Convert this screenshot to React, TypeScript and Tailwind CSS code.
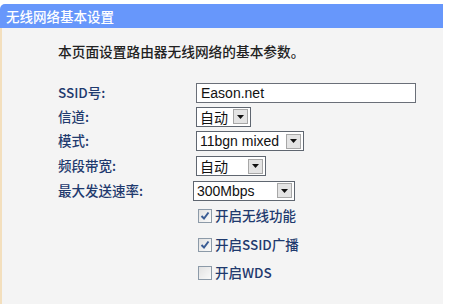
import React from "react";

const CJK = { fontFamily: '"Noto Sans CJK SC", "Noto Sans", sans-serif' };
const ARIAL = { fontFamily: '"Liberation Sans", "Noto Sans CJK SC", sans-serif' };

function Arrow() {
  return (
    <span className="flex h-[15px] w-[15px] items-center justify-center border border-[#a7a7a7] bg-[#e4e4e4]">
      <svg width="7" height="4" viewBox="0 0 7 4">
        <path d="M0 0 H7 L3.5 4 Z" fill="#111" />
      </svg>
    </span>
  );
}

function Select({ text, w, cls = "" }: { text: string; w: string; cls?: string }) {
  return (
    <div
      className={`flex h-[20px] items-center justify-between border border-[#5f6670] bg-white pl-[3px] pr-[2px] ${w} ${cls}`}
    >
      <span className="text-[14px] leading-none text-[#111]" style={/[a-z0-9]/i.test(text) ? ARIAL : CJK}>
        {text}
      </span>
      <Arrow />
    </div>
  );
}

function Check({ checked }: { checked: boolean }) {
  return (
    <span className="flex h-[14px] w-[14px] items-center justify-center border border-[#8c9aa8] bg-gradient-to-br from-[#e2e2e2] to-[#fafafa]">
      {checked && (
        <svg width="10" height="10" viewBox="0 0 10 10">
          <path d="M1.5 5 L4 7.5 L8.5 1.5" stroke="#3a5c94" strokeWidth="2" fill="none" />
        </svg>
      )}
    </span>
  );
}

function Row({ label, children, h = "h-[20px]", mt }: { label: string; children: React.ReactNode; h?: string; mt: string }) {
  return (
    <div className={`flex items-center ${h} ${mt}`}>
      <div className="w-[138px] text-[13.5px] font-medium leading-none text-[#1f3a6e]" style={CJK}>
        {label}
      </div>
      {children}
    </div>
  );
}

function CheckRow({ label, checked, mt }: { label: string; checked: boolean; mt: string }) {
  return (
    <div className={`flex h-[20px] items-center ${mt}`}>
      <div className="w-[140px]" />
      <Check checked={checked} />
      <span className="ml-[3px] text-[13.5px] font-medium leading-none text-[#1f3a6e]" style={CJK}>
        {label}
      </span>
    </div>
  );
}

export default function App() {
  return (
    <div className="h-[307px] w-[455px] overflow-hidden bg-white pt-[4px]">
      <div className="w-[443px]">
        <div
          className="flex h-[24px] items-center rounded-tl-[5px] bg-[#6797fb] pl-[6px] text-[13.5px] font-medium text-white"
          style={CJK}
        >
          无线网络基本设置
        </div>
        <div className="h-[276px] border-l-[2px] border-[#f3dfbd] bg-[#f4f4f4] pl-[56px] pt-[14px]">
          <div className="flex h-[20px] items-center text-[13.7px] font-medium leading-none text-[#222]" style={CJK}>
            本页面设置路由器无线网络的基本参数。
          </div>
          <Row label="SSID号:" mt="mt-[21px]">
            <div className="flex h-[20px] w-[220px] items-center border border-[#6a6f78] bg-white pl-[4px]">
              <span className="text-[14px] leading-none text-[#111]" style={ARIAL}>
                Eason.net
              </span>
            </div>
          </Row>
          <Row label="信道:" mt="mt-[4px]" h="h-[19px]">
            <Select text="自动" w="w-[55px]" cls="h-[19px]" />
          </Row>
          <Row label="模式:" mt="mt-[5px]">
            <Select text="11bgn mixed" w="w-[108px]" />
          </Row>
          <Row label="频段带宽:" mt="mt-[5px]">
            <Select text="自动" w="w-[70px]" />
          </Row>
          <Row label="最大发送速率:" mt="mt-[5px]" h="h-[19px]">
            <Select text="300Mbps" w="w-[102px]" cls="-ml-[3px] h-[19px]" />
          </Row>
          <CheckRow label="开启无线功能" checked mt="mt-[6px]" />
          <CheckRow label="开启SSID广播" checked mt="mt-[9px]" />
          <CheckRow label="开启WDS" checked={false} mt="mt-[8px]" />
        </div>
      </div>
    </div>
  );
}
